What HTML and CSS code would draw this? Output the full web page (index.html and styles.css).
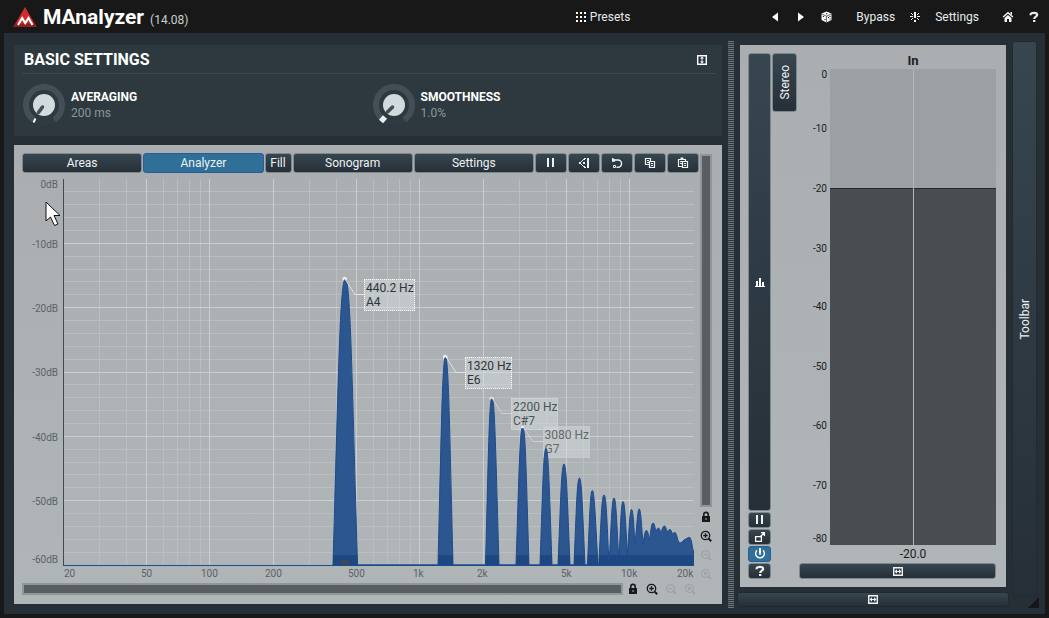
FILE: index.html
```
<!DOCTYPE html>
<html lang="en">
<head>
<meta charset="utf-8">
<meta name="viewport" content="width=device-width, initial-scale=1">
<title>MAnalyzer</title>
<link rel="stylesheet" href="styles.css">
</head>
<body>
<svg class="defs" width="0" height="0" aria-hidden="true">
  <symbol id="i-pause" viewBox="0 0 12 12"><path fill="currentColor" d="M2 1h2v9H2zM7 1h2v9H7z"/></symbol>
  <symbol id="i-lock" viewBox="0 0 12 12"><path fill="currentColor" d="M2 5h8v6H2z"/><path fill="none" stroke="currentColor" stroke-width="1.6" d="M3.8 5V3.6a2.2 2.2 0 0 1 4.4 0V5"/><path fill="#acb1b4" d="M5.5 7h1v2h-1z"/></symbol>
  <symbol id="i-zoomin" viewBox="0 0 12 12"><g fill="none" stroke="currentColor" stroke-width="1.3"><circle cx="5.5" cy="5.5" r="4.2"/><path d="M3.3 5.5h4.4M5.5 3.3v4.4"/><path stroke-width="2" d="M8.6 8.6l2.6 2.6"/></g></symbol>
  <symbol id="i-zoomout" viewBox="0 0 12 12"><g fill="none" stroke="currentColor"><circle cx="5.5" cy="5.5" r="4"/><path d="M3.5 5.5h4"/><path stroke-width="1.6" d="M8.6 8.6l2.4 2.4"/></g></symbol>
  <symbol id="i-zoomreset" viewBox="0 0 12 12"><g fill="none" stroke="currentColor"><circle cx="5.5" cy="5.5" r="4"/><path d="M4.5 4.5h2v2h-2z"/><path stroke-width="1.6" d="M8.6 8.6l2.4 2.4"/></g></symbol>
  <symbol id="i-wide" viewBox="0 0 10 9"><path fill="none" stroke="currentColor" stroke-width="1.4" d="M.7.7h8.6v7.600H.7z"/><path fill="currentColor" d="M1.500 4.500L4 2.300V4h2V2.300l2.500 2.200L6 6.700V5H4v1.700z"/></symbol>
  <symbol id="i-help" viewBox="0 0 12 12"><path fill="none" stroke="currentColor" stroke-width="2.2" d="M2.6 4.2V3.6C2.6 1.4 9.2 1.2 9.2 4 9.2 5.8 6.2 5.6 6.2 8"/><path fill="currentColor" d="M5 9h2.4v2H5z"/></symbol>
</svg>

<header class="topbar">
  <div class="brand">
    <svg class="logo" viewBox="0 0 24 20" aria-hidden="true"><path fill="#8d2022" d="M3 15L0 20h24l-3-5z"/><path fill="#cf2e2e" d="M12 0l9.5 16.500H2.500z"/><path fill="none" stroke="#fff" stroke-width="2" d="M5 18l4.200-7 3 5 3.300-5L19.500 18"/></svg>
    <h1 class="title">MAnalyzer</h1>
    <span class="version">(14.08)</span>
  </div>
  <button class="plain presets"><svg class="grid-icon" viewBox="0 0 10 10" aria-hidden="true"><path fill="#fff" d="M0 0h2v2H0zM4 0h2v2H4zM8 0h2v2H8zM0 4h2v2H0zM4 4h2v2H4zM8 4h2v2H8zM0 8h2v2H0zM4 8h2v2H4zM8 8h2v2H8z"/></svg>Presets</button>
  <nav class="actions">
    <button class="plain" aria-label="Previous"><svg class="icon" viewBox="0 0 12 12"><path fill="#fff" d="M9 1.500v9L3 6z"/></svg></button>
    <button class="plain" aria-label="Next"><svg class="icon" viewBox="0 0 12 12"><path fill="#fff" d="M3 1.500v9L9 6z"/></svg></button>
    <button class="plain" aria-label="Random"><svg class="icon" viewBox="0 0 12 12"><path fill="#f2f4f4" d="M5.500 0.500l5 2v6.500l-5 2.500-5-2.500V2.500z"/><path fill="none" stroke="#181818" stroke-width=".6" d="M.5 3l5 2.200 5-2.200M5.500 5.200v6"/><path fill="#181818" d="M2 5h1v1H2zM3.500 8h1v1h-1zM7 6h1v1H7zM8.500 5h1v1h-1zM8.500 7.500h1v1h-1zM5 2.300h1.200v1H5z"/></svg></button>
    <button class="plain bypass">Bypass</button>
    <button class="plain" aria-label="Activity"><svg class="icon" viewBox="0 0 12 12"><path fill="#f2f4f4" d="M5 1h2v6H5zM5 9h2v2H5zM1 5h3v1H1zM8 5h3v1H8zM2 2h1v1H2zM3 3h1v1H3zM9 2h1v1H9zM8 3h1v1H8zM3 7h1v1H3zM2 8h1v1H2zM8 7h1v1H8zM9 8h1v1H9z"/></svg></button>
    <button class="plain settings">Settings</button>
    <button class="plain" aria-label="Home"><svg class="icon" viewBox="0 0 12 12"><path fill="none" stroke="#f2f4f4" stroke-width="1.500" d="M1.200 6L6 1.700 10.800 6"/><path fill="#f2f4f4" d="M8.500 1H10v3L8.500 3zM2.500 7L6 4l3.500 3v4h-2.500V8H5v3H2.500z"/></svg></button>
    <button class="plain" aria-label="Help"><svg class="icon"><use href="#i-help"/></svg></button>
  </nav>
</header>

<main class="frame">
  <div class="left">
    <section class="basic">
      <div class="basic-head">
        <h2 class="basic-title">BASIC SETTINGS</h2>
        <button class="plain" aria-label="Collapse"><svg class="collapse" viewBox="0 0 10 10"><path fill="#27323a" stroke="#fff" stroke-width="1.400" d="M.7.7h8.600v8.600H.7z"/><path fill="#fff" d="M5 1.500l2 2H5.500v3H7l-2 2-2-2h1.500v-3H3z"/></svg></button>
      </div>
      <div class="knobs">
        <div class="knob-row">
          <div class="knob">
            <svg viewBox="-21 -21 42 42" aria-hidden="true"><circle r="18" fill="none" stroke="#2e3a44" stroke-width="5"/><path fill="none" stroke="#444e57" stroke-width="6" d="M-10.300 14.700A18 18 0 1 1 10.300 14.700"/><circle r="11" fill="#d0dadf"/><path stroke="#454b51" stroke-width="3.500" stroke-linecap="round" d="M-1.500 2L-5.500 7.500"/><path stroke="#fff" stroke-width="2" d="M-8.500 13.500L-10.500 17.500"/></svg>
            <input type="range" id="averaging" min="0" max="5000" value="200">
          </div>
          <div class="knob-text"><label class="knob-name" for="averaging">AVERAGING</label><span class="knob-value">200 ms</span></div>
        </div>
        <div class="knob-row">
          <div class="knob">
            <svg viewBox="-21 -21 42 42" aria-hidden="true"><circle r="18" fill="none" stroke="#2e3a44" stroke-width="5"/><path fill="none" stroke="#444e57" stroke-width="6" d="M-10.300 14.700A18 18 0 1 1 10.300 14.700"/><circle r="11" fill="#d0dadf"/><path stroke="#454b51" stroke-width="3.500" stroke-linecap="round" d="M-1.500 2L-6.500 7"/><path stroke="#e9eef0" stroke-width="5.500" d="M-9 12L-13 16.500"/></svg>
            <input type="range" id="smoothness" min="0" max="100" value="1">
          </div>
          <div class="knob-text"><label class="knob-name" for="smoothness">SMOOTHNESS</label><span class="knob-value">1.0%</span></div>
        </div>
      </div>
    </section>

    <section class="analyzer">
      <div class="graph-side">
        <div class="tabs">
          <button class="btn tab">Areas</button>
          <button class="btn tab active">Analyzer</button>
          <button class="btn fill">Fill</button>
          <button class="btn tab">Sonogram</button>
          <button class="btn tab">Settings</button>
          <button class="btn tool" aria-label="Pause"><svg class="icon"><use href="#i-pause"/></svg></button>
          <button class="btn tool" aria-label="Normalize"><svg class="icon" viewBox="0 0 12 12"><path fill="#eef2f3" d="M9 1h2v10H9zM1 5h2v2H1zM3 4h1v1H3zM3 7h1v1H3zM4 3h1v1H4zM4 8h1v1H4zM5 2h2v1H5zM5 9h2v1H5zM6 1h2v1H6zM6 10h2v1H6zM5 5h2v2H5z"/></svg></button>
          <button class="btn tool" aria-label="Reset"><svg class="icon" viewBox="0 0 12 12"><path fill="none" stroke="#eef2f3" stroke-width="1.400" d="M2 3h5a3.500 3.500 0 0 1 0 7.200H5.500"/><path fill="#eef2f3" d="M1 1h1.500v1.200H4v2.600H1z"/><path fill="none" stroke="#eef2f3" d="M2.500 8.500h2v2h-2z"/></svg></button>
          <button class="btn tool" aria-label="Copy"><svg class="icon" viewBox="0 0 12 12"><g fill="#2d3840" stroke="#eef2f3" stroke-width="1.200"><path d="M1.500 1.500h5v6h-5z"/><path d="M5.500 4.500h5v6h-5z"/></g><path fill="#eef2f3" d="M3 3h2v1H3zM3 5h2v1H3zM7 6h2v1H7zM7 8h2v1H7z"/></svg></button>
          <button class="btn tool" aria-label="Paste"><svg class="icon" viewBox="0 0 12 12"><g fill="#2d3840" stroke="#eef2f3" stroke-width="1.200"><path d="M1.500 2.500h7v7h-7z"/><path d="M5.500 4.500h5v6h-5z"/></g><path fill="#eef2f3" d="M3.500.5h3V3h-3zM3 4h2v1H3zM3 6h2v1H3zM7 6h2v1H7zM7 8h2v1H7z"/></svg></button>
        </div>

        <div class="chart">
          <div class="y-axis"><span>0dB</span><span>-10dB</span><span>-20dB</span><span>-30dB</span><span>-40dB</span><span>-50dB</span><span>-60dB</span></div>
          <div class="plot">
            <svg class="layer" viewBox="63 179 631 387" preserveAspectRatio="none" aria-hidden="true">
              <g shape-rendering="crispEdges" fill="none" stroke-width="1">
                <path stroke="#babec1" d="M99.500 179v386M126.500 179v386M163.500 179v386M177.500 179v386M189.500 179v386M200.500 179v386M309.500 179v386M336.500 179v386M373.500 179v386M387.500 179v386M399.500 179v386M410.500 179v386M519.500 179v386M546.500 179v386M583.500 179v386M597.500 179v386M609.500 179v386M620.500 179v386"/>
                <path stroke="#babec1" d="M63 191.500h631M63 204.500h631M63 217.500h631M63 230.500h631M63 256.500h631M63 269.500h631M63 281.500h631M63 294.500h631M63 320.500h631M63 333.500h631M63 346.500h631M63 359.500h631M63 384.500h631M63 397.500h631M63 410.500h631M63 423.500h631M63 449.500h631M63 462.500h631M63 474.500h631M63 487.500h631M63 513.500h631M63 526.500h631M63 539.500h631M63 552.500h631"/>
                <path stroke="#cbced0" d="M146.500 179v386M209.500 179v386M273.500 179v386M356.500 179v386M419.500 179v386M483.500 179v386M566.500 179v386M629.500 179v386M63 243.500h631M63 307.500h631M63 372.500h631M63 436.500h631M63 500.500h631"/>
              </g>
            </svg>
            <div class="callout" style="left:47.700%;top:25.800%">440.2 Hz<br>A4</div>
            <div class="callout" style="left:63.700%;top:46%">1320 Hz<br>E6</div>
            <div class="callout faded" style="left:71%;top:56.600%">2200 Hz<br>C#7</div>
            <div class="callout faint" style="left:76%;top:63.800%">3080 Hz<br>G7</div>
            <svg class="layer" viewBox="63 179 631 387" preserveAspectRatio="none" role="img" aria-label="Frequency spectrum">
              <clipPath id="curve"><path id="curve-shape" d="M333 565C338.400 379 340 279 345.300 279S351.900 379 357.500 565H438C441.400 430 442.400 357 445.500 357S449.600 430 453 565H485.500C488.400 456 489.200 398 492 398S495.800 456 499 565H516C519 475 519.900 427 522.700 427S526.200 475 529 565H540C542.700 489 543.500 448.500 546 448.500S549.300 489 552 565H558C560.700 499 561.500 464 564 464S567.300 499 570 565H574C576.400 508 577.100 478 579.400 478S582.400 508 585 565H587.500C589.600 517 590.300 490.500 592.300 490.500S595.300 517 598 565H598.800C601.100 519 601.800 495 604 495S606.900 519 609 565C611.400 521 612 498 614 498S616.600 521 619 563C620.600 523 621.200 501.500 623 501.500S625.400 520 627.500 555C629.200 528 629.800 509.500 631.500 509.500S633.800 525 635 545C637 525 637.600 509 639.200 509S641.500 525 643 544C644.500 535 645 530.500 646.500 530.500S648.500 536 649.500 540C651 530 651.500 523 653 523S655 528 656 532C657 529 657.500 528 658.500 528S660 531 661 533C662.500 528 663 526 664.500 526S666 530 667.500 532C668.500 530 669 529.500 670 529.500S671.500 532 672.500 534C673.500 533 674 532.500 675 532.500C677 533 677.500 543 680 543C683 543 683 539 686 539C688 538 688 537 690 537.500C692 540 692 548 693.500 551V565Z"/></clipPath>
              <use href="#curve-shape" fill="#2b568f" stroke="#1c4b8d" stroke-width="1"/>
              <g clip-path="url(#curve)"><path fill="#1f4a84" d="M63 555h631v10H63z"/><path stroke="#1a4581" stroke-width="10" stroke-dasharray="1 1" d="M333 560h361"/><path fill="#39485a" d="M341 560h8v5h-8z"/></g>
              <path fill="none" stroke="#dfe3e5" stroke-width="1" d="M345 279l10 15.500h9M446 357l10 15.500h9"/>
              <path fill="none" stroke="#cdd2d4" stroke-width="1" d="M492 398l10 15.500h9M523 427l10 14.500h10"/>
              <path fill="#eceff0" d="M342.500 281v-3l2-1.500 2.500 1.500v3l-2-2zM443 359v-3l2-1.500 2.500 1.500v3l-2-2zM489.500 400v-2l2-1.500 2.500 1.500v2l-2-2zM521 428v-1l1.500-1.500 1.500 1.500v1z"/>
              <path stroke="#454a4e" d="M63.500 179v386"/>
              <path stroke="#1c4b8d" d="M63 565.500h631"/>
            </svg>
          </div>
        </div>
        <div class="x-axis"><span>20</span><span>50</span><span>100</span><span>200</span><span>500</span><span>1k</span><span>2k</span><span>5k</span><span>10k</span><span>20k</span></div>

        <div class="h-scroll">
          <div class="scrollbar wide"></div>
          <button class="mini" aria-label="Lock horizontal"><svg class="icon"><use href="#i-lock"/></svg></button>
          <button class="mini" aria-label="Zoom in horizontally"><svg class="icon"><use href="#i-zoomin"/></svg></button>
          <button class="mini off" aria-label="Zoom out horizontally"><svg class="icon"><use href="#i-zoomout"/></svg></button>
          <button class="mini off" aria-label="Reset horizontal zoom"><svg class="icon"><use href="#i-zoomreset"/></svg></button>
        </div>
      </div>
      <div class="v-scroll">
        <div class="scrollbar tall"></div>
        <button class="mini" aria-label="Lock vertical"><svg class="icon"><use href="#i-lock"/></svg></button>
        <button class="mini" aria-label="Zoom in vertically"><svg class="icon"><use href="#i-zoomin"/></svg></button>
        <button class="mini off" aria-label="Zoom out vertically"><svg class="icon"><use href="#i-zoomout"/></svg></button>
        <button class="mini off" aria-label="Reset vertical zoom"><svg class="icon"><use href="#i-zoomreset"/></svg></button>
      </div>
      <svg class="pointer" viewBox="0 0 16 26" aria-hidden="true"><path fill="#fff" stroke="#111" d="M1 1v19l4.500-4 4 8.500 3.500-1.500-4-8.500H15z"/></svg>
    </section>
  </div>

  <div class="splitter"></div>

  <div class="right">
    <section class="meters">
      <div class="rail">
        <button class="btn rail-main" aria-label="Meters"><svg class="icon" viewBox="0 0 12 12" shape-rendering="crispEdges"><path fill="#fff" d="M1 10h10v1H1zM2 5h2v5H2zM5 2h2v8H5zM8 6h2v4H8z"/></svg></button>
        <button class="btn rail-btn" aria-label="Pause meters"><svg class="icon"><use href="#i-pause"/></svg></button>
        <button class="btn rail-btn" aria-label="Pop out"><svg class="icon" viewBox="0 0 12 12"><path fill="none" stroke="#fff" stroke-width="1.300" d="M1.600 5.600h5.800v4.800H1.600zM6 6l4-4M7 1.600h3.400V5"/></svg></button>
        <button class="btn rail-btn active" aria-label="Enable"><svg class="icon" viewBox="0 0 12 12"><path fill="none" stroke="#fff" stroke-width="1.400" d="M3 2.300a4.400 4.400 0 1 0 6 0"/><path fill="#fff" d="M5 0h2v6.500H5z"/></svg></button>
        <button class="btn rail-btn" aria-label="Help for meters"><svg class="icon"><use href="#i-help"/></svg></button>
      </div>
      <button class="btn stereo"><span class="vertical">Stereo</span></button>
      <div class="meter">
        <div class="meter-title">In</div>
        <div class="scale"><span>0</span><span>-10</span><span>-20</span><span>-30</span><span>-40</span><span>-50</span><span>-60</span><span>-70</span><span>-80</span></div>
        <div class="bars">
          <div class="bar"><div class="level" style="height:75%"></div></div>
          <div class="bar"><div class="level" style="height:75%"></div></div>
        </div>
        <div class="meter-value">-20.0</div>
        <button class="btn meter-wide" aria-label="Widen meter"><svg class="wide-icon"><use href="#i-wide"/></svg></button>
      </div>
    </section>
    <button class="btn dim panel-wide" aria-label="Widen panel"><svg class="wide-icon"><use href="#i-wide"/></svg></button>
  </div>

  <div class="edge">
    <button class="btn dim toolbar"><span class="vertical">Toolbar</span></button>
    <svg class="grip" viewBox="0 0 11 11" aria-hidden="true"><path fill="#14161a" d="M11 0v11H0z"/></svg>
  </div>
</main>
</body>
</html>
```
FILE: styles.css
```
* { box-sizing: border-box; }

body {
  margin: 0;
  min-height: 100vh;
  display: flex;
  flex-direction: column;
  background: #181818;
  color: #e6ebed;
  font: 12px/14px Roboto, "Liberation Sans", sans-serif;
}

h1, h2 { margin: 0; }
button { font: inherit; color: inherit; padding: 0; margin: 0; cursor: pointer; }
svg { display: block; }
.defs { position: absolute; }
.icon { width: 12px; height: 12px; flex: none; }

.plain {
  display: flex;
  align-items: center;
  background: none;
  border: 0;
}

/* Top bar */
.topbar {
  display: grid;
  grid-template-columns: 562fr auto 409fr;
  align-items: center;
  height: 33px;
  padding: 0 9px 0 13px;
}
.brand { display: flex; align-items: center; gap: 6px; }
.logo { width: 24px; height: 20px; }
.title { font-size: 21px; line-height: 32px; font-weight: 700; color: #fff; }
.version { padding-top: 7px; color: #c9d0d4; }
.presets { gap: 4px; }
.grid-icon { width: 10px; height: 10px; }
.actions { display: flex; justify-content: flex-end; align-items: center; gap: 14px; }
.bypass { margin-left: 9px; }
.settings { margin-right: 9px; }

/* Window body */
.frame {
  flex: 1;
  display: flex;
  margin: 0 4px 4px;
  padding: 0 6px 0 10px;
  background: #272f36;
}
.left {
  flex: 708;
  min-width: 0;
  display: flex;
  flex-direction: column;
  gap: 9px;
  padding: 12px 0 10px;
}
.splitter {
  width: 6px;
  margin: 8px 3px 6px 6px;
  background: repeating-linear-gradient(#6c737b 0 1px, #2d353d 1px 2px);
}

/* Basic settings */
.basic { height: 91px; background: #2d393f; }
.basic-head {
  display: flex;
  align-items: center;
  justify-content: space-between;
  height: 29px;
  margin: 0 7px 0 9px;
  padding: 1px 8px 0 1px;
  border-bottom: 1px dotted #48535a;
}
.basic-title { font-size: 16px; line-height: 20px; font-weight: 700; color: #fff; }
.collapse { width: 10px; height: 10px; }
.knobs { display: grid; grid-template-columns: 1fr 1fr; padding: 10px 0 0 9px; }
.knob-row { display: flex; gap: 6px; }
.knob { position: relative; width: 42px; height: 42px; }
.knob input { position: absolute; inset: 0; width: 42px; height: 42px; margin: 0; opacity: 0; }
.knob-text { display: flex; flex-direction: column; padding-top: 5px; line-height: 16px; }
.knob-name { font-weight: 700; color: #fff; }
.knob-value { color: #8b959b; }

/* Buttons */
.btn {
  display: flex;
  align-items: center;
  justify-content: center;
  border: 1px solid #7c878e;
  border-radius: 3px;
  background: linear-gradient(#37464f, #262f38);
  color: #eef2f3;
}
.active { border-color: #2a5c9a; background: #2f6f98; }
.dim { border-color: #202a30; }
.vertical { writing-mode: vertical-rl; transform: rotate(180deg); }

/* Analyzer */
.analyzer {
  position: relative;
  flex: 1;
  display: flex;
  gap: 1px;
  padding: 8px 8px 9px;
  background: linear-gradient(#aaaeb1, #b0b5b8);
  color: #5c6266;
}
.graph-side { flex: 1; min-width: 0; display: flex; flex-direction: column; }
.tabs { display: flex; gap: 1px; height: 20px; }
.tab { flex: 1; }
.fill { width: 27px; }
.tool { width: 32px; }
.chart { flex: 1; display: flex; padding: 6px 5px 0 0; }
.y-axis {
  width: 41px;
  display: grid;
  grid-template-rows: 60fr 64fr 64fr 65fr 64fr 58fr 12px;
  padding-right: 5px;
  font-size: 10px;
  line-height: 12px;
  text-align: right;
}
.plot { position: relative; flex: 1; min-height: 240px; }
.layer { position: absolute; inset: 0; width: 100%; height: 100%; }
.callout {
  position: absolute;
  padding: 1px 0 1px 1px;
  border: 1px dotted #fff;
  background: rgba(214, 219, 221, .5);
  color: #2f3539;
  white-space: nowrap;
}
.faded { border: 1px solid #cbd2d5; color: #4d5357; }
.faint { border: 1px solid #c5cccf; color: #64696d; }
.x-axis {
  display: grid;
  grid-template-columns: 77fr 60fr 64fr 83fr 65fr 64fr 84fr 60fr 56fr 17fr;
  padding: 2px 5px 3px 42px;
  font-size: 10px;
  line-height: 12px;
}
.x-axis span { min-width: 0; }
.h-scroll { display: flex; align-items: center; height: 12px; }
.v-scroll {
  width: 14px;
  display: flex;
  flex-direction: column;
  padding-bottom: 12px;
}
.scrollbar { border: 2px solid #8f979c; background: #595e61; }
.wide { flex: 1; height: 12px; }
.tall { flex: 1; width: 12px; margin-top: 1px; }
.mini {
  display: flex;
  align-items: center;
  justify-content: center;
  width: 19px;
  height: 12px;
  border: 0;
  background: none;
  color: #17191b;
}
.v-scroll .mini { width: 12px; height: 19px; }
.off { color: #999fa2; }
.pointer { position: absolute; left: 31px; top: 56px; width: 16px; height: 26px; }

/* Meters */
.right {
  flex: 272;
  min-width: 0;
  display: flex;
  flex-direction: column;
  gap: 5px;
  padding: 12px 0 7px;
}
.meters {
  flex: 1;
  display: grid;
  grid-template-columns: 23px 25px 1fr;
  column-gap: 1px;
  margin: 0 3px;
  padding: 8px 10px 8px 8px;
  background: linear-gradient(#aaaeb1, #b0b5b8);
}
.rail { display: flex; flex-direction: column; gap: 1px; }
.rail-main { flex: 1; }
.rail-btn { height: 16px; }
.stereo { height: 59px; }
.meter {
  display: grid;
  grid-template-columns: 31px 1fr;
  grid-template-rows: 16px 1fr 18px 16px;
  padding-left: 1px;
  color: #1b2023;
}
.meter-title { grid-column: 2; font-size: 13px; line-height: 16px; font-weight: 700; text-align: center; }
.scale {
  display: grid;
  grid-template-rows: 54fr 60fr 60fr 59fr 60fr 59fr 60fr 53fr 12px;
  padding-right: 3px;
  font-size: 10px;
  line-height: 11px;
  text-align: right;
}
.bars { display: grid; grid-template-columns: 1fr 1fr; gap: 1px; background: #b3b8bb; }
.bar { display: flex; align-items: flex-end; background: #9ba1a3; }
.level { width: 100%; border-top: 1px solid #222a2d; background: #494d50; }
.meter-value { grid-column: 2; line-height: 18px; text-align: center; }
.meter-wide { grid-column: 1 / 3; }
.wide-icon { width: 10px; height: 9px; }
.panel-wide { height: 15px; }

/* Right edge */
.edge { width: 30px; display: flex; flex-direction: column; padding: 8px 0 6px 3px; }
.toolbar { flex: 1; margin-right: 2px; }
.grip { width: 11px; height: 11px; align-self: flex-end; }
```
